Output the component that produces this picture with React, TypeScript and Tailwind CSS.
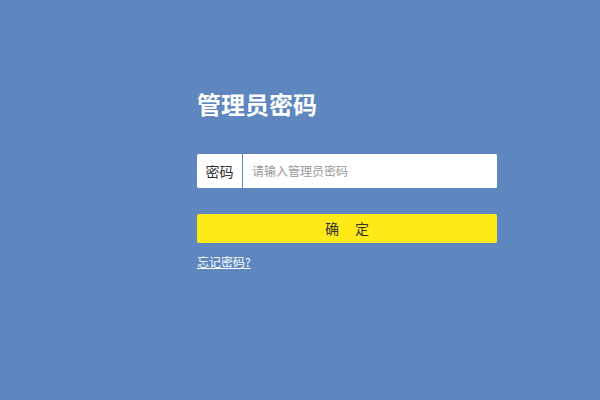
import { useState } from 'react';

const cjk = { fontFamily: '"Noto Sans CJK SC", "Liberation Sans", sans-serif' };

export default function App() {
  const [password, setPassword] = useState('');

  return (
    <div className="w-[600px] h-[400px] bg-[#5e87c0] overflow-hidden" style={cjk}>
      <div className="w-[300px] ml-[197px] pt-[88px]">
        <h1 className="text-[24px] leading-[32px] font-bold text-white">管理员密码</h1>

        {/* Password field */}
        <div className="mt-[34px] flex h-[34px] bg-white rounded-[2px] overflow-hidden">
          <div className="w-[46px] flex items-center justify-center text-[14px] text-[#333] border-r border-[#5e87c0]">
            密码
          </div>
          <input
            type="password"
            value={password}
            onChange={(e) => setPassword(e.target.value)}
            placeholder="请输入管理员密码"
            className="flex-1 pl-[9px] text-[12px] text-[#333] placeholder:text-[#999] outline-none bg-white"
          />
        </div>

        <button className="mt-[26px] w-full h-[29px] bg-[#ffea17] rounded-[2px] text-[14px] text-[#333] flex items-center justify-center">
          确<span className="w-[16px]" />定
        </button>

        <a href="#" className="block mt-[10px] text-[12px] leading-[18px] text-white underline">
          忘记密码?
        </a>
      </div>
    </div>
  );
}
